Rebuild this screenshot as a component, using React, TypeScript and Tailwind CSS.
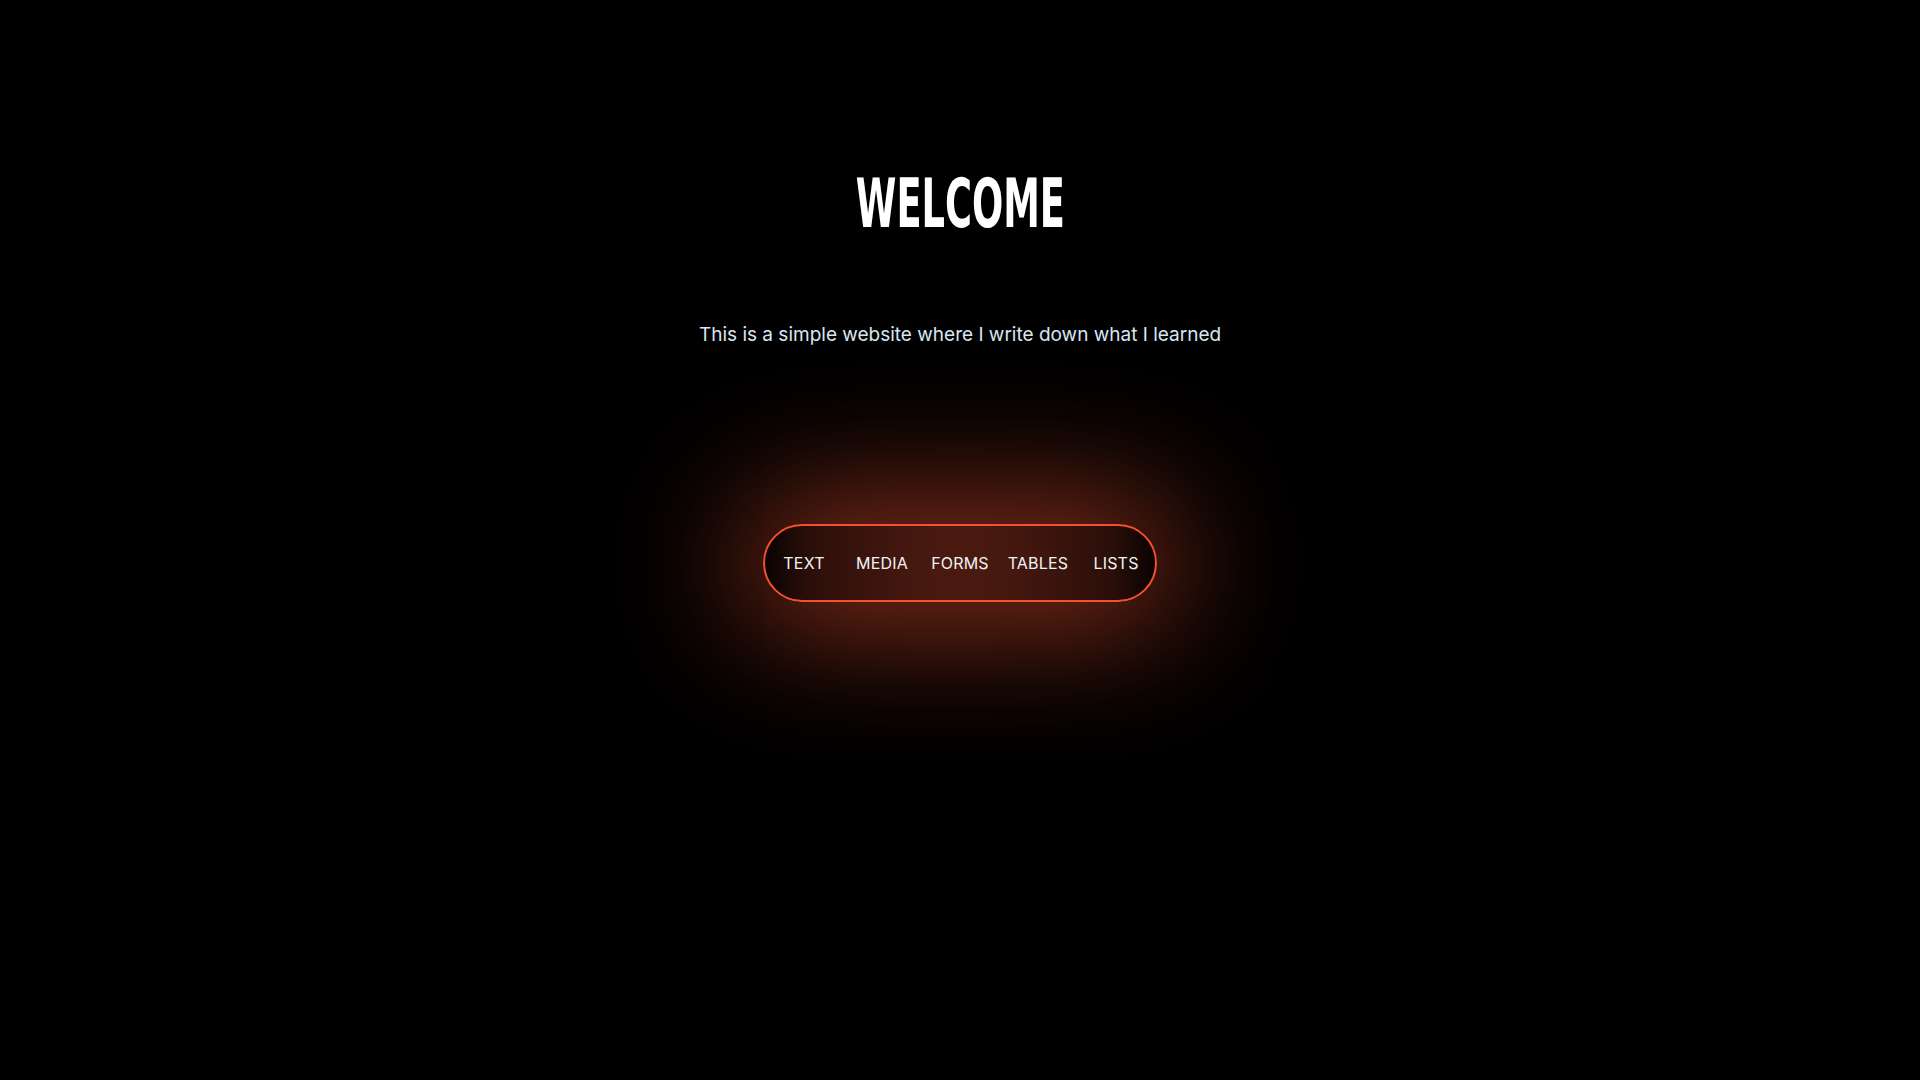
const links = ["TEXT", "MEDIA", "FORMS", "TABLES", "LISTS"];

export default function App() {
  return (
    <div className="min-h-screen w-full bg-black flex flex-col items-center font-['Inter','Liberation_Sans',sans-serif]">
      <h1 className="mt-[171px] h-[66px] text-[67px] leading-none font-bold text-white scale-x-[0.61] font-['DejaVu_Sans_Condensed','Liberation_Sans',sans-serif]">
        WELCOME
      </h1>

      <p className="mt-[88px] text-[19px] leading-none text-[#d9e6f2]">
        This is a simple website where I write down what I learned
      </p>

      {/* nav pill with glow */}
      <nav className="mt-[180px] w-[394px] h-[78px] rounded-full border-2 border-[#f5502f] shadow-[0_0_130px_25px_rgba(225,78,45,0.62)] bg-[linear-gradient(90deg,#0a0302_0%,#2c0f09_12%,#43170f_35%,#4a1a10_50%,#43170f_65%,#2c0f09_88%,#0a0302_100%)] grid grid-cols-5 items-center">
        {links.map(link => (
          <a key={link} href="#" className="text-center text-[16px] text-[#f2f2f2] tracking-[0.2px]">
            {link}
          </a>
        ))}
      </nav>
    </div>
  );
}
